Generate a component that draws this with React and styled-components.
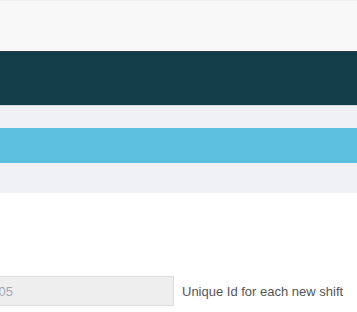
import React from "react";
import styled, { createGlobalStyle } from "styled-components";

const Global = createGlobalStyle`
  html, body { margin: 0; padding: 0; background: #ffffff; }
  body { font-family: Arial, "Liberation Sans", sans-serif; overflow: hidden; }
`;

const Page = styled.div`
  width: 357px;
  height: 312px;
  overflow: hidden;
  display: flex;
  flex-direction: column;
`;

const TopBar = styled.div`
  height: 50px;
  background: #f8f8f8;
  border-top: 1px solid #eeeef3;
`;

const NavBar = styled.div`
  height: 53px;
  background: #143d4a;
  border-top: 1px solid #2f3a40;
  border-bottom: 1px solid #d5dbe0;
`;

const Band = styled.div`
  background: #f0f1f5;
  padding: 22px 0 30px;
`;

const InfoBar = styled.div`
  height: 35px;
  background: #5bc0de;
`;

const FormArea = styled.div`
  padding-top: 83px;
`;

const Row = styled.div`
  display: flex;
  align-items: center;
`;

const Input = styled.input`
  box-sizing: border-box;
  width: 201px;
  height: 30px;
  margin: 0 0 0 -27px;
  padding: 0 0 0 10px;
  border: 1px solid #dcdcdc;
  background: #eeeeee;
  color: #a4a7ae;
  font-family: Arial, "Liberation Sans", sans-serif;
  font-size: 13px;
  outline: none;
`;

const Help = styled.span`
  margin-left: 8px;
  font-size: 13px;
  color: #555555;
`;

export default function App() {
  return (
    <Page>
      <Global />
      <TopBar />
      <NavBar />
      <Band>
        <InfoBar />
      </Band>
      <FormArea>
        <Row>
          <Input readOnly value="1005" />
          <Help>Unique Id for each new shift</Help>
        </Row>
      </FormArea>
    </Page>
  );
}
